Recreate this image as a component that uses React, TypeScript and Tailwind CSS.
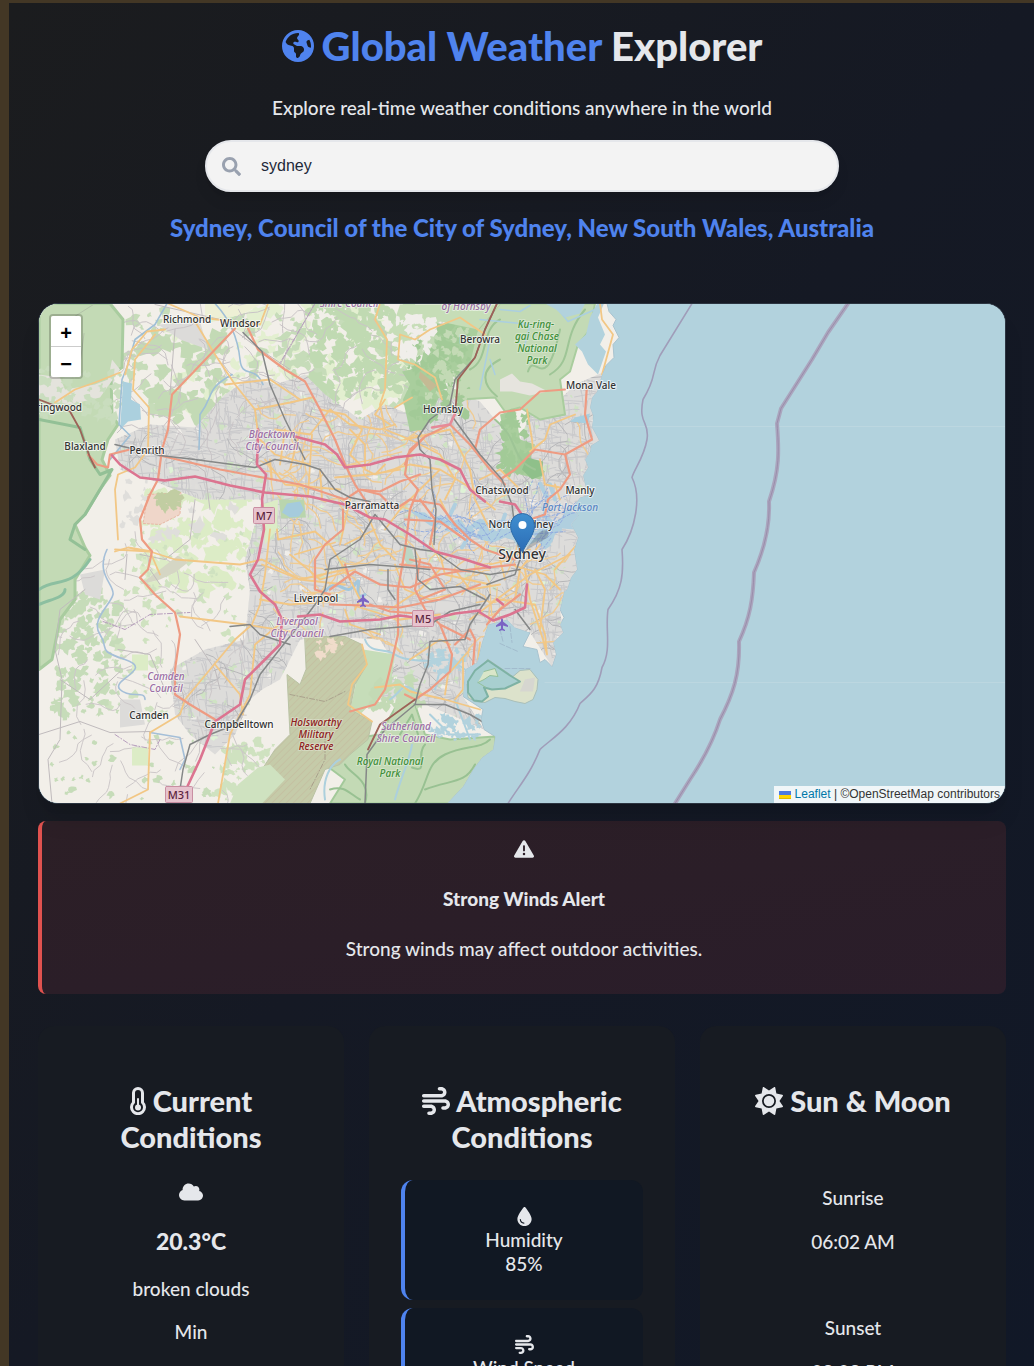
import { useState, type ReactNode } from "react";
import { FaSearch } from "react-icons/fa";
import { FaCloud, FaDroplet, FaEarthAmericas, FaSun, FaTriangleExclamation, FaWind } from "react-icons/fa6";

/* ---------- map drawing ---------- */

function makeRandom(seed: number) {
  let s = seed;
  return () => {
    s = (s * 1664525 + 1013904223) % 4294967296;
    return s / 4294967296;
  };
}

function streets(count: number, seed: number) {
  const r = makeRandom(seed);
  let d = "";
  for (let i = 0; i < count; i++) {
    const x = 110 + r() * 480;
    const y = 360 + r() * 390;
    const flip = r() > 0.5;
    const len = 6 + r() * 18;
    const skew = (r() - 0.5) * 9;
    const dx = flip ? len : skew;
    const dy = flip ? skew : len;
    d += `M${x.toFixed(1)} ${y.toFixed(1)}l${(dx / 2 + r() * 2).toFixed(1)} ${(dy / 2).toFixed(1)}l${(dx / 2).toFixed(1)} ${(dy / 2 + r() * 2).toFixed(1)}`;
  }
  return d;
}

function lanes(count: number, seed: number, x0: number, y0: number, w: number, h: number) {
  const r = makeRandom(seed);
  let d = "";
  for (let i = 0; i < count; i++) {
    let a = r() * Math.PI * 2;
    d += `M${(x0 + r() * w).toFixed(1)} ${(y0 + r() * h).toFixed(1)}`;
    for (let k = 0; k < 6; k++) {
      a += (r() - 0.5) * 1.5;
      const q = 4 + r() * 6;
      d += `l${(Math.cos(a) * q).toFixed(1)} ${(Math.sin(a) * q).toFixed(1)}`;
    }
  }
  return d;
}

function patches(count: number, seed: number, x0: number, y0: number, w: number, h: number, size: number) {
  const r = makeRandom(seed);
  let d = "";
  for (let i = 0; i < count; i++) {
    const cx = x0 + r() * w;
    const cy = y0 + r() * h;
    const n = 10;
    const base = size * (0.3 + r());
    for (let k = 0; k < n; k++) {
      const a = (k / n) * Math.PI * 2;
      const q = base * (0.35 + r());
      d += `${k ? "L" : "M"}${(cx + Math.cos(a) * q).toFixed(1)} ${(cy + Math.sin(a) * q).toFixed(1)}`;
    }
    d += "Z";
  }
  return d;
}

const LAND =
  "M39 304H607L609 312 616 320 613 326 619 338 613 345 614 358 606 366 602 375 597 392 592 398 590 408 593 416 592 428 599 441 591 446 590 452 585 460 588 468 583 476 585 485 590 495 580 498 573 508 578 516 571 525 578 538 574 550 577 570 571 578 567 590 564 592 560 610 564 618 560 625 563 633 553 643 556 655 552 667 545 660 540 663 537 650 523 647 530 633 515 628 507 620 488 625 482 643 477 663 465 670 463 697 483 710 481 720 484 730 495 737 493 750 482 758 473 770 463 787 447 804H39Z";
const URBAN =
  "M115 440L150 425 195 428 225 395 250 378 275 385 305 375 325 395 360 420 385 405 410 415 425 400 455 392 480 402 495 420 520 440 530 415 555 405 575 385 605 372 600 400 599 441 588 490 578 540 577 570 560 610 563 633 552 667 530 633 488 625 480 660 463 697 484 730 450 715 425 705 400 700 380 700 365 690 395 665 380 640 330 637 300 640 280 680 262 690 250 700 235 735 215 755 190 735 175 715 170 670 205 650 245 640 250 590 245 560 262 500 200 500 150 480 120 470Z";

const LABELS: { x: number; y: number; text: string; kind: "town" | "city" | "area" | "park" | "army" | "sea" }[] = [
  { x: 187, y: 323, text: "Richmond", kind: "town" },
  { x: 240, y: 327, text: "Windsor", kind: "town" },
  { x: 480, y: 343, text: "Berowra", kind: "town" },
  { x: 591, y: 389, text: "Mona Vale", kind: "town" },
  { x: 443, y: 413, text: "Hornsby", kind: "town" },
  { x: 59, y: 411, text: "ringwood", kind: "town" },
  { x: 85, y: 450, text: "Blaxland", kind: "town" },
  { x: 147, y: 454, text: "Penrith", kind: "town" },
  { x: 502, y: 494, text: "Chatswood", kind: "town" },
  { x: 580, y: 494, text: "Manly", kind: "town" },
  { x: 372, y: 509, text: "Parramatta", kind: "town" },
  { x: 521, y: 528, text: "North Sydney", kind: "town" },
  { x: 522, y: 559, text: "Sydney", kind: "city" },
  { x: 316, y: 602, text: "Liverpool", kind: "town" },
  { x: 149, y: 719, text: "Camden", kind: "town" },
  { x: 239, y: 728, text: "Campbelltown", kind: "town" },
  { x: 349, y: 307, text: "Shire Council", kind: "area" },
  { x: 466, y: 310, text: "of Hornsby", kind: "area" },
  { x: 272, y: 438, text: "Blacktown", kind: "area" },
  { x: 272, y: 450, text: "City Council", kind: "area" },
  { x: 297, y: 625, text: "Liverpool", kind: "area" },
  { x: 297, y: 637, text: "City Council", kind: "area" },
  { x: 166, y: 680, text: "Camden", kind: "area" },
  { x: 166, y: 692, text: "Council", kind: "area" },
  { x: 406, y: 730, text: "Sutherland", kind: "area" },
  { x: 406, y: 742, text: "Shire Council", kind: "area" },
  { x: 536, y: 328, text: "Ku-ring-", kind: "park" },
  { x: 537, y: 340, text: "gai Chase", kind: "park" },
  { x: 537, y: 352, text: "National", kind: "park" },
  { x: 537, y: 364, text: "Park", kind: "park" },
  { x: 390, y: 765, text: "Royal National", kind: "park" },
  { x: 390, y: 777, text: "Park", kind: "park" },
  { x: 316, y: 726, text: "Holsworthy", kind: "army" },
  { x: 316, y: 738, text: "Military", kind: "army" },
  { x: 316, y: 750, text: "Reserve", kind: "army" },
  { x: 570, y: 511, text: "Port Jackson", kind: "sea" },
];

const LABEL_STYLE = {
  town: "fill-[#333] stroke-white/70 text-[10px]",
  city: "fill-[#333] stroke-white/70 text-sm",
  area: "fill-[#9b6ea5] stroke-white/50 text-[10px] italic",
  park: "fill-[#3f8f3a] stroke-white/30 text-[10px] italic",
  army: "fill-[#8f2020] stroke-white/30 text-[10px] italic",
  sea: "fill-[#5b87c4] stroke-white/30 text-[10px] italic",
};

function Shield({ x, y, w, text }: { x: number; y: number; w: number; text: string }) {
  return (
    <g>
      <rect x={x - w / 2} y={y - 8} width={w} height="16" rx="1" fill="#e7c3ce" stroke="#c98fa2" />
      <text x={x} y={y + 4} textAnchor="middle" className="fill-[#5c2540] text-[11px] font-medium">
        {text}
      </text>
    </g>
  );
}

const PLANE = "M0-6c1 0 1 1 1 3l5 4v1.500l-5-1.500v3l2 1.500v1l-3-.8-3 .8v-1l2-1.500v-3l-5 1.500V1l5-4c0-2 0-3 1-3z";

const OUTER_LIMIT =
  "M848 304L828 333 812 360 781 409 777 424C779 450 780 470 769 502C770 525 765 548 754 573C753 600 750 618 739 642C740 675 733 695 720 720C712 745 700 765 690 780L675 804";

function MapDrawing() {
  return (
    <svg
      viewBox="39 304 966 500"
      preserveAspectRatio="xMidYMid slice"
      className="block h-full w-full font-['Noto_Sans',sans-serif]"
      role="img"
      aria-label="Map of Sydney"
      fill="none"
      strokeLinejoin="round"
      strokeLinecap="round"
    >
      <defs>
        <clipPath id="land">
          <path d={LAND} />
        </clipPath>
        <clipPath id="urban">
          <path d={URBAN} />
        </clipPath>
        <pattern id="hatch" width="5" height="5" patternUnits="userSpaceOnUse" patternTransform="rotate(45)">
          <rect width="5" height="5" fill="#c5cba9" />
          <path d="M0 0V5" stroke="#c4b79c" />
        </pattern>
        <linearGradient id="pin" x1="0" y1="0" x2="0" y2="1">
          <stop offset="0" stopColor="#3f8fd0" />
          <stop offset="1" stopColor="#2c6cb5" />
        </linearGradient>
      </defs>

      <rect x="39" y="304" width="966" height="500" fill="#b2d2dd" />
      <path d="M590 427H1005M545 683H1005" stroke="#bcd7e0" />
      <path d={LAND} fill="#f2efe9" stroke="#a9c3cf" />

      <g clipPath="url(#land)">
        {/* farmland and scrub */}
        <path d={patches(110, 5, 140, 490, 110, 100, 8)} fill="#dcecc6" />
        <path d={patches(90, 9, 160, 305, 250, 110, 8)} fill="#e3efd0" />
        <path d={patches(160, 31, 120, 310, 300, 110, 6)} fill="#c6dcb9" />
        <path d={patches(130, 32, 55, 590, 65, 130, 5)} fill="#c6dcb9" />
        <path d={patches(40, 36, 45, 720, 200, 80, 4)} fill="#c6dcb9" />
        <path d={patches(110, 34, 110, 530, 140, 190, 4)} fill="#cfe2c0" />
        <path d={patches(230, 35, 310, 305, 120, 90, 6)} fill="#c0dab2" />
        <path d={patches(40, 38, 150, 340, 70, 80, 9)} fill="#c3dab5" />
        <path d={patches(60, 39, 215, 740, 60, 60, 5)} fill="#cfe2c0" />
        <path d="M205 304H262L240 316 205 320Z" fill="#eef0d5" />

        {/* built-up area */}
        <path d={URBAN} fill="#dddcda" />
        <path d="M158 325L200 322 208 350 180 340ZM60 378L115 380 110 392 70 400ZM80 575L105 570 100 600 85 595ZM120 700L140 700 145 725 120 728Z" fill="#dcdbd9" />
        <path d={patches(26, 52, 120, 480, 130, 60, 6)} fill="#dfdedb" />
        <g clipPath="url(#urban)">
          <path d={patches(380, 44, 115, 370, 480, 370, 4)} fill="#cfe3c3" />
          <path d={patches(160, 46, 115, 370, 480, 370, 3)} fill="#f0eeea" />
          <path d={patches(120, 47, 115, 370, 480, 370, 3)} fill="#dff3d6" />
          <path d={streets(3600, 18)} stroke="#c9c9cb" strokeWidth="1" />
          <path d={lanes(160, 77, 115, 370, 480, 370)} stroke="#b6b6b8" />
          <path d={lanes(90, 78, 260, 400, 320, 240)} stroke="#f0cb92" strokeWidth="1.300" />
        </g>
        <path d={lanes(90, 79, 60, 304, 390, 130)} stroke="#c9c4c6" />
        <path d={lanes(60, 80, 50, 560, 200, 240)} stroke="#cdc8c9" />

        {/* forests */}
        <path
          d="M39 304H110L123 320 122 368 111 375 112 415 118 425 108 440 102 460 110 476 100 490 85 515 75 525 85 548 90 556 75 580 75 600 60 620 52 660 39 670Z"
          fill="#c3dab5"
          stroke="#a9cc9f"
          strokeWidth="3"
        />
        <path d="M39 375L60 378 65 390 95 385 108 380 112 360 120 370 100 398 70 405 39 400Z" fill="#e4e3dc" />
        <path d={patches(60, 60, 39, 370, 80, 50, 5)} fill="#c9ddbe" />
        <path d="M39 420L80 428 90 460 100 475 112 470 85 515 75 525 70 540 85 550" stroke="#93c096" strokeWidth="3" />
        <path d="M39 590C55 578 70 590 90 560M39 605C50 600 65 598 65 590" stroke="#8cbfa0" strokeWidth="3" />
        <path
          d="M500 304H595L590 330 578 345 570 372 560 380 565 415 540 420 520 408 505 412 495 398 460 400 452 360 478 330Z"
          fill="#c3dab5"
          stroke="#a9cd9e"
          strokeWidth="2"
        />
        <path d="M500 380L512 374 520 382 532 384 548 392 530 396 512 392 500 392Z" fill="#e6e4de" />
        <path
          d="M455 318L478 330 470 365 452 372 440 395 425 430 410 432 403 400 410 385 402 372 420 368 425 345 440 330Z"
          fill="#a9ce9d"
        />
        <path d={patches(120, 61, 408, 325, 62, 95, 5)} fill="#a2ca97" />
        <path d={patches(60, 62, 425, 330, 45, 70, 4)} fill="#c3dab5" />
        <path
          d="M500 415L515 410 520 440 535 445 530 460 545 472 540 480 520 475 500 460 505 440Z"
          fill="#a9ce9d"
        />
        <path d={patches(50, 63, 500, 412, 30, 60, 5)} fill="#a2ca97" />
        <path d="M420 372L437 386 430 392 419 378Z" fill="#c4ba94" />
        <path d="M400 305H500L478 330 440 322 410 345 385 340 395 320Z" fill="#c6ddb7" />
        <path d={patches(50, 64, 385, 318, 50, 40, 5)} fill="#f0eeea" />
        <path d="M527 458L543 462 542 476 532 480 522 470Z" fill="#8fc08a" />
        <path
          d="M500 360C480 370 482 385 497 397M528 372C535 350 545 400 560 330M585 310C560 340 575 360 550 375M470 370C490 360 480 330 500 320M495 420C520 440 510 460 535 470"
          stroke="#9ec596"
          strokeWidth="2"
        />
        <path
          d="M330 804L345 780 325 765 345 745 360 738 380 735 400 700 415 705 425 735 450 740 480 738 495 737 500 804Z"
          fill="#c3dab5"
          stroke="#a3c99a"
          strokeWidth="2"
        />
        <path
          d="M415 804C430 780 425 765 445 755S480 750 490 740M425 790C450 780 465 785 475 765M412 768C430 775 415 755 425 745M365 804C372 780 350 775 345 765M330 790C345 785 350 795 360 800M400 735L412 715 418 735"
          stroke="#98c192"
          strokeWidth="2"
        />
        <path d="M363 650L395 655 390 690 375 700 360 715 350 712Z" fill="#c6ddb9" />
        <path d={patches(60, 65, 370, 680, 50, 30, 5)} fill="#c3dab5" />
        <path
          d="M305 637L345 637 362 645 367 665 355 685 350 710 372 722 368 740 350 755 340 765 325 770 310 804H245L262 770 275 750 290 735 287 675 300 685 306 670Z"
          fill="url(#hatch)"
          stroke="#b9c2a4"
        />
        <path d={patches(12, 66, 312, 642, 30, 25, 4)} fill="#f0dccb" />
        <path d="M258 768L238 785 230 804H262L285 780 270 765Z" fill="#cfe2c0" />

        {/* heath and reserves */}
        <path d="M148 495L181 493 180 515 160 525 143 524Z" fill="#efd6c9" stroke="#e7b7a4" strokeDasharray="2 2" />
        <path d={patches(22, 67, 158, 495, 22, 14, 5)} fill="#c1cda2" />
        <path d="M140 585L160 570 178 556 188 563 175 573 160 580Z" fill="#d5d6c4" />
        <path d="M132 655H148V671H132ZM132 748H148V766H132ZM262 505L278 500 277 530 265 545Z" fill="#dcecc6" />
        <path d="M70 320L95 304M84 334L80 365" stroke="#b2c2a8" />
        <path d="M403 545L412 550 415 562 408 566 402 556Z" fill="#bcd6c4" />

        {/* lakes, rivers, harbour */}
        <path d="M279 500L304 500 306 518 281 519Z" fill="#b9d5ad" />
        <path d="M287 504L300 502 304 510 299 517 290 518 282 513Z" fill="#a5cbdc" />
        <path d="M123 382L132 384 131 400 140 405 141 420 128 422 120 430 122 400Z" fill="#abd0de" />
        <path
          d="M167 304L155 325 135 340 128 365 122 380 119 425 130 436 110 460M215 304C230 320 238 340 240 360S255 365 263 385M232 375C205 390 215 395 200 415L199 450"
          stroke="#9fbfd6"
          strokeWidth="1.600"
        />
        <path
          d="M107 550C95 575 115 585 113 595S90 620 100 635 95 650 125 660 110 680 120 690 145 690 145 700M150 733L180 738 185 760 180 770"
          stroke="#a5bfd8"
          strokeWidth="1.600"
        />
        <path
          d="M410 512L425 513 432 519 440 516 448 522 460 520 466 527 480 519 490 524 500 520 507 526 515 530 524 526 535 533 548 522 560 520 567 510 580 515 575 530 562 529 555 535 551 546 545 550 538 541 530 545 520 552 514 541 505 538 493 543 480 540 465 532 452 533 430 526Z"
          fill="#b0cfdf"
        />
        <path
          d="M540 484L548 500 543 515 560 530M555 500L550 485M500 530L505 515M470 535L462 548M448 520L455 505M530 540L545 505M570 515L585 520"
          stroke="#b0cfdf"
          strokeWidth="4"
        />
        <path d={patches(24, 68, 430, 510, 140, 35, 3)} fill="#dcdcd9" />
        <path
          d="M400 513C420 505 425 525 445 518S475 530 495 523 520 540 550 525 565 515 585 512M455 530L470 540M480 525L490 540M500 538L515 530M530 535L565 532M430 512L445 525M465 518L475 528M545 500L548 515"
          stroke="#8da9de"
          strokeDasharray="3 2"
        />
        <path d={lanes(26, 90, 430, 512, 130, 28)} stroke="#95aedf" strokeDasharray="3 2" />
        <path d="M325 592C340 575 345 600 355 585S350 605 365 595" stroke="#a3c7dc" strokeWidth="3" />
        <path
          d="M365 640C370 655 385 648 395 655S430 662 450 660L465 670M390 700C405 690 400 680 420 695M430 715L450 735 480 735M440 670L435 690M455 700L470 740M395 800C400 780 410 760 412 745M325 800C322 780 330 765 340 760"
          stroke="#acd0dd"
          strokeWidth="2"
        />
        <path d={patches(30, 69, 425, 650, 40, 25, 4)} fill="#b2d2dd" />
        <path d={patches(30, 70, 430, 715, 50, 25, 4)} fill="#b2d2dd" />
        <path d="M500 310L520 312 530 306M480 320L530 325 525 345M490 360L495 375M553 304L568 322 595 310M490 340L480 390" stroke="#abcfe0" strokeWidth="1.500" />
        <path d="M545 304L585 304 580 314 565 318 556 310ZM597 304H604L598 318 605 335 600 345 606 352 598 375 588 365 582 352 575 345 586 335 590 318Z" fill="#b2d2dd" />
        <path d="M575 418L590 414 588 424 570 422Z" fill="#a7cfe0" />

        {/* local tracks */}
        <path
          d="M85 590L60 610 55 650 62 680 60 740 48 760 52 804M39 735L80 722 110 733 150 732M118 650L150 655 165 690M60 680L90 700 120 672M150 570L160 585M127 555L125 580M188 460L205 472 210 510M155 305L220 320 260 350 290 370M175 330L170 395M315 304L280 365M140 555L165 560 190 540 195 500M195 640L215 670 220 690"
          stroke="#c0bbbd"
        />
        <path
          d="M103 622L125 630 150 615 190 613M115 735L130 745 155 750 160 740M315 304L278 367"
          stroke="#b79ebd"
          strokeDasharray="5 2 1 2"
        />
        <path d="M290 695L325 702 345 692M325 735L325 760 310 790" stroke="#a9a08c" strokeDasharray="5 2 1 2" />

        {/* secondary roads */}
        <g stroke="#f2c785" strokeWidth="1.800">
          <path d="M165 330L147 332 132 350 125 375M155 335L135 360 133 390 149 408 148 450 135 468 118 475 115 490 118 540M195 322L215 355 235 385 255 410 258 435M55 403L75 390 95 383 120 373" />
          <path d="M168 304L200 318 260 325 268 304M255 410L290 403 312 398M275 430L310 435 330 410 350 425 380 430 395 425M320 410L345 415 362 430 350 455 363 468" />
          <path d="M265 460L285 485 340 490M255 435L275 455 310 465M295 555L335 543M270 460L272 480M312 435L308 495M290 470L300 430M277 530L278 540 315 532 330 545 345 570 300 580 262 565M345 570L360 600 355 610" />
          <path d="M380 304L375 320 387 340 385 390 380 405 385 430 410 440M395 408L412 398M430 330L415 340 400 335 398 360 415 365 435 378 442 400M430 330L460 318 485 335" />
          <path d="M527 410L532 440 533 450 545 440 550 425 575 415M540 460L545 485 560 488M600 304L602 320 613 335 602 375M545 440L530 452" />
          <path d="M350 430L365 445 365 470 375 475 385 465M375 475L410 465 440 470 465 485 495 510M430 480L440 470M335 478L370 475 400 470M405 440L450 430 470 470" />
          <path d="M115 550L150 552 175 560 240 565 262 560 300 580 345 585M150 552L160 575M290 555L320 580 355 570M180 617L245 625 290 632M115 552L128 548 152 552M270 530L265 575 260 605 252 625 235 640 210 670 185 700 180 715 150 733 148 790 120 804" />
          <path d="M215 665L240 695 243 715M260 600L290 605 330 602M350 605L400 620 440 615M285 620L255 645 250 695 230 735 218 804M362 645L367 665 352 685 348 705 372 722" />
          <path d="M375 688L400 685 410 692 445 700 480 710M463 660L463 690 455 700M410 660L440 640 450 645M480 643L478 660M500 600L535 605 545 635 547 655 543 640 530 600 525 570M535 570L545 590 540 630M470 620L510 590 530 575 570 555" />
          <path d="M395 565L405 590 430 600 450 595M440 555L445 575 490 585M390 610L420 590 440 570M505 580L500 560 530 550M520 550L510 560 490 565M365 510L380 545 395 560M430 480L400 510 385 530M470 470L475 500 490 530M440 500L450 520M555 570L577 545M540 545L520 570 515 600M445 695L448 675 470 650" />
          <path d="M225 385L270 380 300 400M285 430L280 465M320 470L322 500M340 545L350 500M375 530L345 545M410 440L440 455 455 480 445 500M480 480L500 470 520 490M560 500L555 485M385 400L375 415 390 425M510 565L545 575 560 590M455 570L470 590 500 585M345 610L350 625 380 635" />
        </g>

        {/* primary roads */}
        <g stroke="#ee9b82" strokeWidth="2.200">
          <path d="M235 329L215 350 172 395 168 430 162 450 158 480 150 495 140 520 142 540 152 552 148 570 140 578 155 595 175 613 180 635 175 670 175 695 190 705 215 720" />
          <path d="M248 329L258 350 285 370 305 382 320 410 335 440 345 465 355 485 368 505M160 456L220 470 300 485 345 500M110 455L130 450M88 455L97 465 108 468 110 455" />
          <path d="M343 510L343 530 325 545 315 560 315 590 330 595M345 500L360 490 380 492 400 482 420 475M360 490L380 495 395 510 410 500 440 505 455 525M408 455L405 475 418 490 410 510 405 550 398 590 398 635 390 670 385 690 375 705 350 712" />
          <path d="M408 455L425 437 450 425 470 445 490 470 505 485M425 437L410 450 405 465M475 450L480 430 500 413 520 410 540 392 565 390M587 385L585 415 592 440 565 455 535 450 515 470 500 480M565 455L570 475 560 490 548 500 545 515 530 520" />
          <path d="M330 590L355 572 380 585 410 588 440 575 470 570 515 565M330 605L365 606 400 608 440 600 480 585M400 565L430 568 470 572M345 565L350 580M410 560L430 565 445 590 420 600M370 605L390 612 430 615" />
          <path d="M420 560L415 590 425 610 440 625 452 655 450 672 430 690 415 700 405 695M455 645L470 630 475 640 472 680M487 625L500 610 520 595M455 525L470 540 485 550 515 560M440 625L470 640M405 520L440 522 465 540M430 545L435 520 420 500" />
        </g>

        {/* railways */}
        <g stroke="#858787" strokeWidth="1.500">
          <path d="M115 445L160 456 195 460 255 468 275 460 305 465 320 470 335 490 350 498 370 502" />
          <path d="M243 333L262 352 270 385 285 420 305 460M497 304L485 330 475 358 455 380 450 405 430 420 418 438 420 450 430 460 432 490 436 510 434 545" />
          <path d="M453 418L480 455 502 480 512 505 515 530 520 555M375 515L400 545 420 550 435 552 460 570 490 575 520 570M375 515L360 540 330 560 325 590 315 605 300 625 285 643 260 675 250 700 235 725 210 735 190 745 183 770 180 790" />
          <path d="M415 550L418 580 430 590 460 587 485 600M490 595L470 625 465 640 430 642 428 665 420 685 415 705 385 730 367 755 365 804M415 705L445 705 470 715 482 722M325 570L370 565 410 568 430 570M388 570L388 590 395 600M480 605L450 612 430 625 370 630 330 637" />
          <path d="M230 627L250 625 260 635 290 645M487 585L515 575 520 560M515 610L530 630" />
        </g>
        <path d="M39 400L70 412 80 430 90 458 95 468M497 304L485 330 475 358 458 380 455 415M415 700L380 725 368 750" stroke="#9d6258" strokeWidth="1.800" />

        {/* motorways */}
        <g stroke="#dc7490" strokeWidth="2.600">
          <path d="M112 456L120 465 140 478 165 481 195 477 230 486 265 493 310 497 345 505 370 518 385 520 410 535 435 552 465 560 490 568" />
          <path d="M258 430L257 465 266 475 262 500 264 530 258 560 250 575 260 592 275 605 282 620 280 645 260 665 245 680 240 705 215 722 200 760 186 790" />
          <path d="M295 437L325 445 337 455 345 468 370 465 395 458 420 455 440 460 460 470 470 490 485 502" />
          <path d="M298 617L320 615 340 622 380 620 400 616 430 620 455 614 480 611M480 613L493 621 510 615 525 608 527 585M500 502L515 505 525 520M497 600L503 605" />
          <path d="M455 414L450 425 432 428" stroke="#e58a99" />
        </g>
      </g>

      {/* Kurnell */}
      <path
        d="M488 660L513 677 520 671 530 670 538 680 537 690 533 700 525 704 515 702 505 699 495 698 485 703 475 702 468 698 467 685Z"
        fill="#dce2cb"
        stroke="#a9bfb9"
      />
      <path
        d="M488 661L475 671 468 682 468 693 474 701 482 702 488 697 484 688 492 690 505 689 520 682 510 676Z"
        fill="#a8cfd0"
        stroke="#7eb2a4"
        strokeWidth="2"
      />
      <path d="M484 672L495 669 498 677 490 676 484 680 478 683M478 683L486 688" fill="#d9e6c9" stroke="#94c09a" />
      <path d="M525 680L535 678 533 692 520 692Z" fill="#d6d6d0" />
      <path d="M500 644L518 652M500 630L503 642M510 627L512 643M505 669L530 669" stroke="#a2bccd" strokeDasharray="5 2" />

      {/* maritime limits */}
      <path
        d="M692 304L660 356C650 375 658 375 643 400C638 425 650 422 647 440S634 470 632 478C642 498 635 530 622 550C624 575 622 590 608 610C605 630 612 650 602 668C598 690 590 695 580 704C570 730 550 740 540 750C530 775 520 785 508 804"
        stroke="#a09db9"
        strokeWidth="1.600"
      />
      <path d={OUTER_LIMIT} stroke="#aaa6be" strokeWidth="4" />
      <path d={OUTER_LIMIT} stroke="#9b8dab" />

      <path d={PLANE} transform="translate(363 601)" fill="#7a63c4" />
      <path d={PLANE} transform="translate(502 625)" fill="#7a63c4" />
      <Shield x={264} y={516} w={21} text="M7" />
      <Shield x={423} y={619} w={21} text="M5" />
      <Shield x={179} y={795} w={27} text="M31" />

      {LABELS.map((l, i) => (
        <text
          key={i}
          x={l.x}
          y={l.y}
          textAnchor="middle"
          strokeWidth="2"
          paintOrder="stroke"
          className={LABEL_STYLE[l.kind]}
        >
          {l.text}
        </text>
      ))}

      {/* marker */}
      <path d="M524 552L538 534C545 527 553 532 546 539Z" fill="#000" opacity=".18" />
      <path
        d="M522.500 553C519 543 510.500 536 510.500 526a12 12 0 0 1 24 0C534.500 536 526 543 522.500 553Z"
        fill="url(#pin)"
        stroke="#2e6ca8"
      />
      <circle cx="522.500" cy="525.500" r="4" fill="#fff" />
    </svg>
  );
}

/* ---------- page ---------- */

function Thermometer() {
  return (
    <svg viewBox="0 0 16 28" className="inline-block h-7 w-4 align-[-3px]" fill="none" aria-hidden="true">
      <path
        d="M3.500 6a4.500 4.500 0 0 1 9 0V15.500a6.500 6.500 0 1 1-9 0Z"
        stroke="currentColor"
        strokeWidth="3"
        strokeLinejoin="round"
      />
      <circle cx="8" cy="20.500" r="3" fill="currentColor" />
      <path d="M8 12v8" stroke="currentColor" strokeWidth="2" strokeLinecap="round" />
    </svg>
  );
}

function Card({ icon, title, children }: { icon: ReactNode; title: string; children: ReactNode }) {
  return (
    <section className="rounded-2xl bg-[#171b22] px-8 pt-[57px] pb-8 text-center">
      <h2 className="min-h-[72px] text-[29px] leading-9 font-black">
        {icon} {title}
      </h2>
      {children}
    </section>
  );
}

function Metric({ icon, label, value }: { icon: ReactNode; label: string; value: string }) {
  return (
    <li className="flex flex-col items-center rounded-xl border-l-4 border-[#4f83ee] bg-[#111823] py-6">
      <span className="flex h-6 items-center">{icon}</span>
      <span>{label}</span>
      <span>{value}</span>
    </li>
  );
}

export default function App() {
  const [query, setQuery] = useState("sydney");
  return (
    <div className="h-screen overflow-hidden border-t-3 border-l-[9px] border-[#433725] bg-linear-to-br from-[#1b1c1e] via-[#151924] to-[#111827] px-7 pl-[29px] font-['Lato',sans-serif] text-[19px] leading-6 font-medium text-gray-200">
      <header className="flex flex-col items-center text-center">
        <h1 className="mt-[18px] flex items-center gap-2 text-[40px] leading-[50px] font-black">
          <FaEarthAmericas className="size-8 text-[#4f83ee]" />
          <span>
            <span className="text-[#4f83ee]">Global Weather</span> Explorer
          </span>
        </h1>
        <p className="mt-[25px]">Explore real-time weather conditions anywhere in the world</p>
        <label className="mt-5 flex h-[52px] w-full max-w-[634px] items-center gap-5 rounded-full border-2 border-gray-200 bg-[#f3f3f3] px-[15px] shadow-lg">
          <FaSearch className="size-[19px] shrink-0 text-gray-400" />
          <input
            type="text"
            aria-label="Search location"
            value={query}
            onChange={(e) => setQuery(e.target.value)}
            className="min-w-0 flex-1 bg-transparent font-['Liberation_Sans',sans-serif] text-base text-gray-800 outline-none"
          />
        </label>
        <h2 className="mt-5 text-2xl leading-8 font-black text-[#4f83ee]">
          Sydney, Council of the City of Sydney, New South Wales, Australia
        </h2>
      </header>

      <main>
        <div className="relative mt-[59px] h-[501px] overflow-hidden rounded-[20px] border border-[#2b3440] bg-[#b2d2dd] shadow-xl">
          <MapDrawing />
          <div className="absolute top-[10px] left-[10px] flex flex-col overflow-hidden rounded border-2 border-black/20 bg-clip-padding font-['Liberation_Sans',sans-serif] text-xl leading-none font-bold text-black">
            <button type="button" aria-label="Zoom in" className="h-[31px] w-[30px] border-b border-[#ccc] bg-white pt-[3px]">
              +
            </button>
            <button type="button" aria-label="Zoom out" className="h-[30px] w-[30px] bg-white pt-[3px]">
              −
            </button>
          </div>
          <div className="absolute right-0 bottom-0 flex items-center gap-1 bg-white/80 px-[5px] font-['Liberation_Sans',sans-serif] text-xs leading-[17px] text-[#333]">
            <svg viewBox="0 0 12 8" className="h-2 w-3" aria-hidden="true">
              <path fill="#4C7BE1" d="M0 0h12v4H0z" />
              <path fill="#FFD500" d="M0 4h12v3H0z" />
              <path fill="#E0BC00" d="M0 7h12v1H0z" />
            </svg>
            <span>
              <a href="#leaflet" className="text-[#0078a8]">
                Leaflet
              </a>{" "}
              | ©OpenStreetMap contributors
            </span>
          </div>
        </div>

        <section
          role="alert"
          className="mt-[17px] flex flex-col items-center gap-[26px] rounded-lg border-l-4 border-[#e0524f] bg-linear-to-br from-[#2c1f26] to-[#2a1d2a] px-4 pt-4 pb-[33px] text-center"
        >
          <span className="flex h-6 items-center">
            <FaTriangleExclamation className="size-5" />
          </span>
          <h3 className="font-black">Strong Winds Alert</h3>
          <p>Strong winds may affect outdoor activities.</p>
        </section>

        <div className="mt-8 grid grid-cols-3 gap-[25px]">
          <Card icon={<Thermometer />} title="Current Conditions">
            <div className="flex flex-col items-center pt-[25px]">
              <span className="flex h-6 items-center">
                <FaCloud className="size-6" />
              </span>
              <strong className="mt-[21px] text-[23px] leading-8 font-black">20.3°C</strong>
              <p className="mt-5">broken clouds</p>
              <p className="mt-[19px]">Min</p>
              <p className="mt-5">19.4°C</p>
            </div>
          </Card>
          <Card icon={<FaWind className="inline-block size-7 align-[-3px]" />} title="Atmospheric Conditions">
            <ul className="flex flex-col gap-2 pt-[25px]">
              <Metric icon={<FaDroplet className="size-[19px]" />} label="Humidity" value="85%" />
              <Metric icon={<FaWind className="size-[19px]" />} label="Wind Speed" value="11.3 m/s" />
            </ul>
          </Card>
          <Card icon={<FaSun className="inline-block size-7 align-[-3px]" />} title="Sun &amp; Moon">
            <dl className="pt-[31px]">
              <dt>Sunrise</dt>
              <dd className="mt-5">06:02 AM</dd>
              <dt className="mt-[62px]">Sunset</dt>
              <dd className="mt-5">08:08 PM</dd>
            </dl>
          </Card>
        </div>
      </main>
    </div>
  );
}
